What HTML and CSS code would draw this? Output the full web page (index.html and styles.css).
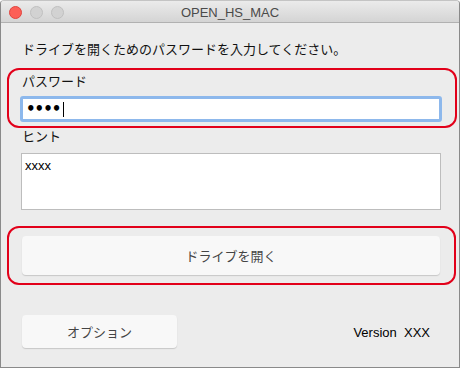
FILE: index.html
```html
<!DOCTYPE html>
<html lang="ja">
	<head>
		<meta charset="UTF-8">
		<meta name="viewport" content="width=device-width, initial-scale=1.0">
		<title>OPEN_HS_MAC</title>
		<link rel="stylesheet" href="styles.css">
	</head>
	<body>
		<div id="window">
			<div class="titlebar">
				<div class="lights">
					<span class="light red"></span>
					<span class="light"></span>
					<span class="light"></span>
				</div>
				<div class="title">OPEN_HS_MAC</div>
			</div>
			<div class="content">
				<p class="intro">ドライブを開くためのパスワードを入力してください。</p>
				<div class="mark passbox">
					<p class="label">パスワード</p>
					<div class="passfield">
						<span class="dots">••••</span><span class="caret"></span>
					</div>
				</div>
				<p class="label hintlabel">ヒント</p>
				<div class="hintfield">xxxx</div>
				<div class="mark openbox">
					<button class="btn openbtn">ドライブを開く</button>
				</div>
				<div class="footer">
					<button class="btn optbtn">オプション</button>
					<span class="version">Version&nbsp;&nbsp;XXX</span>
				</div>
			</div>
		</div>
	</body>
</html>
```

FILE: styles.css
```css
:root{
	--bg-color:#ececec;
	--mark-color:#e2001a;
	--text-color:#111;
}
body{
	margin:0;
	background-color:#fff;
	font-family:"Liberation Sans", "Noto Sans CJK JP", sans-serif;
	font-size:13px;
	color:var(--text-color);
}
#window{
	width:460px;
	height:368px;
	box-sizing:border-box;
	border:1px solid #8a8a8a;
	border-top-color:#c4c4c4;
	border-radius:4px 4px 0 0;
	background-color:var(--bg-color);
	overflow:hidden;
}
.titlebar{
	height:21px;
	display:flex;
	align-items:center;
	justify-content:center;
	position:relative;
	background:linear-gradient(#ebebeb, #d4d4d4);
	border-bottom:1px solid #b1b1b1;
}
.lights{
	position:absolute;
	left:8px;
	top:5px;
	display:flex;
	gap:8px;
}
.light{
	width:11px;
	height:11px;
	border-radius:50%;
	background-color:#d2d2d2;
	border:1px solid #c0c0c0;
}
.light.red{
	background-color:#fc5f57;
	border-color:#e0443e;
}
.title{
	color:#4a4a4a;
	font-size:13px;
	margin-top:1px;
}
.content{
	padding:0 2px 0 6px;
}
.intro{
	margin:19px 0 0 15px;
	line-height:16px;
}
.mark{
	border:2px solid var(--mark-color);
	border-radius:12px;
}
.passbox{
	margin-top:10px;
	padding:4px 13px 4px 11px;
}
.label{
	margin:0 0 0 2px;
	line-height:16px;
}
.passfield{
	margin-top:6px;
	height:20px;
	border:3px solid #8db8ec;
	border-radius:3px;
	background-color:#fff;
	display:flex;
	align-items:center;
	padding-left:3px;
}
.dots{
	font-size:15px;
	font-weight:bold;
	font-family:"DejaVu Sans", sans-serif;
	letter-spacing:-1px;
	color:#000;
}
.caret{
	width:1px;
	height:15px;
	margin-left:3px;
	background-color:#000;
}
.hintlabel{
	margin:1px 0 0 15px;
}
.hintfield{
	margin:8px 0 0 14px;
	border:1px solid #bdbdbd;
	background-color:#fff;
	padding:5px 3px;
	box-sizing:border-box;
	width:420px;
	height:57px;
	line-height:14px;
	color:#000;
}
.openbox{
	margin:16px 1px 0 0;
	padding:8px 14px 8px 13px;
}
.btn{
	font-family:"Liberation Sans", "Noto Sans CJK JP", sans-serif;
	font-size:13px;
	color:#444;
	background-color:#f8f8f8;
	border:none;
	border-radius:4px;
	box-shadow:0 1px 1px #c8c8c8;
	padding:0;
}
.openbtn{
	width:100%;
	height:39px;
	display:block;
}
.footer{
	margin:30px 0 0 15px;
	display:flex;
	align-items:center;
	justify-content:space-between;
	padding-right:27px;
}
.optbtn{
	width:155px;
	height:33px;
}
.version{
	color:#000;
	margin-top:1px;
}
```
